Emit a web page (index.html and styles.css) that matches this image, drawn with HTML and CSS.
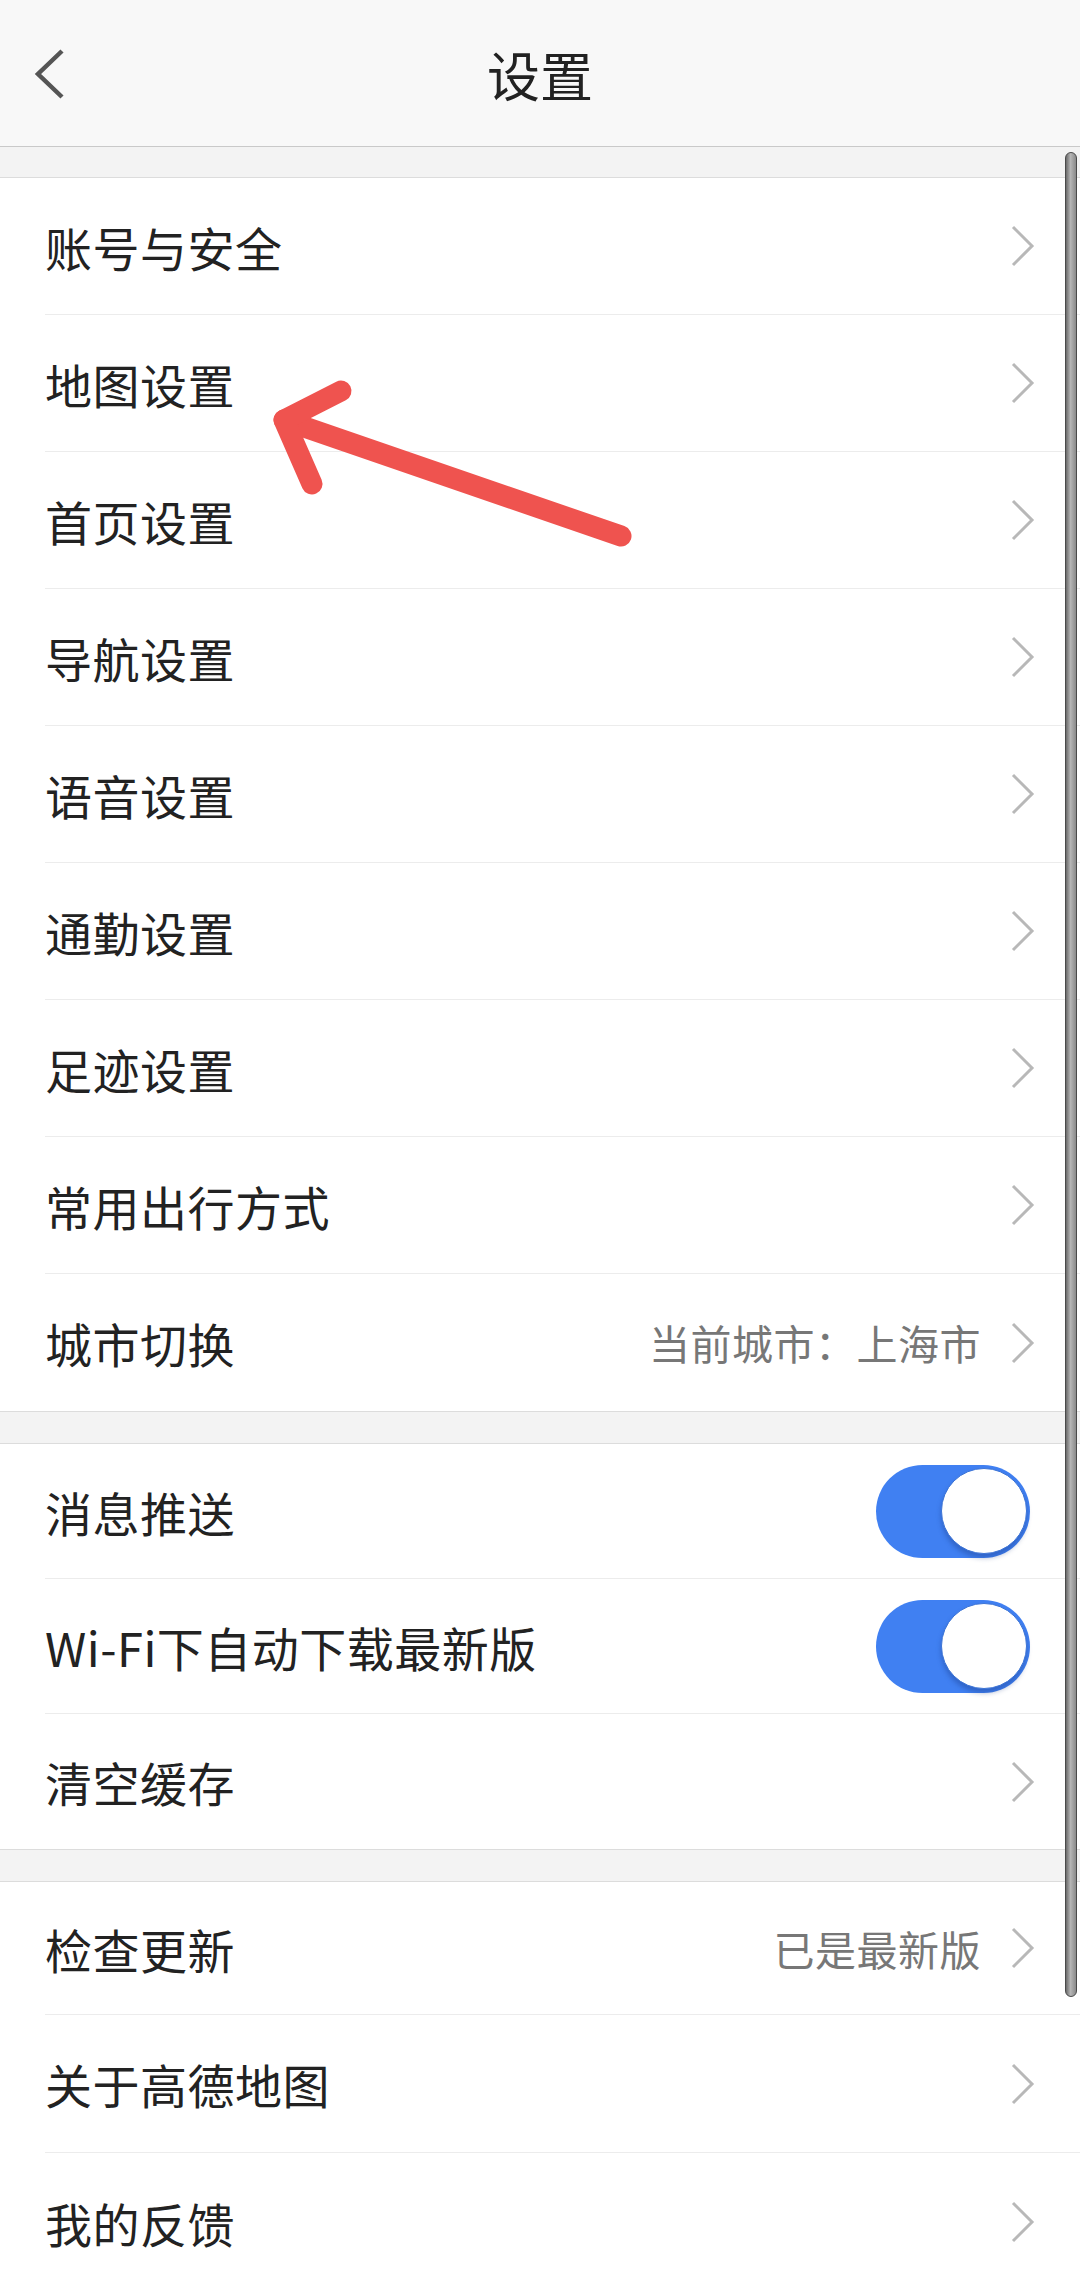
FILE: index.html
```html
<!DOCTYPE html>
<html lang="zh-CN">
<head>
<meta charset="utf-8">
<title>设置</title>
<link rel="stylesheet" href="styles.css">
</head>
<body>
<div class="page">
  <header class="header">
    <svg class="back" width="40" height="56" viewBox="0 0 40 56"><path d="M30 4 L6 27 L30 50" fill="none" stroke="#555" stroke-width="4.5" stroke-linejoin="miter"/></svg>
    <div class="title">设置</div>
  </header>

  <section class="group first">
    <div class="row"><span class="label">账号与安全</span><span class="chev"></span></div>
    <div class="row"><span class="label">地图设置</span><span class="chev"></span></div>
    <div class="row"><span class="label">首页设置</span><span class="chev"></span></div>
    <div class="row"><span class="label">导航设置</span><span class="chev"></span></div>
    <div class="row"><span class="label">语音设置</span><span class="chev"></span></div>
    <div class="row"><span class="label">通勤设置</span><span class="chev"></span></div>
    <div class="row"><span class="label">足迹设置</span><span class="chev"></span></div>
    <div class="row"><span class="label">常用出行方式</span><span class="chev"></span></div>
    <div class="row last"><span class="label">城市切换</span><span class="value">当前城市：上海市</span><span class="chev"></span></div>
  </section>

  <section class="group">
    <div class="row r2"><span class="label">消息推送</span><span class="toggle"><span class="knob"></span></span></div>
    <div class="row r2"><span class="label">Wi-Fi下自动下载最新版</span><span class="toggle"><span class="knob"></span></span></div>
    <div class="row r2 last"><span class="label">清空缓存</span><span class="chev"></span></div>
  </section>

  <section class="group">
    <div class="row r3"><span class="label">检查更新</span><span class="value">已是最新版</span><span class="chev"></span></div>
    <div class="row r3b"><span class="label">关于高德地图</span><span class="chev"></span></div>
    <div class="row r3b last"><span class="label">我的反馈</span><span class="chev"></span></div>
  </section>

  <div class="scrollbar"></div>

  <svg class="arrow" width="1080" height="600" viewBox="0 0 1080 600">
    <g fill="none" stroke="#ef534f" stroke-width="21" stroke-linecap="round" stroke-linejoin="round">
      <path d="M621 536 L284 420"/>
      <path d="M341 391 L284 420 L312 484"/>
    </g>
  </svg>
</div>
</body>
</html>
```

FILE: styles.css
```css
* { box-sizing: border-box; }
html, body {
  margin: 0;
  padding: 0;
  background: #f3f3f3;
}
body {
  font-family: "Noto Sans CJK SC", "Noto Sans", Roboto, sans-serif;
  color: #222;
  width: 1080px;
  height: 2280px;
  overflow: hidden;
}
.page {
  position: relative;
  width: 1080px;
  height: 2280px;
  overflow: hidden;
}
.header {
  height: 147px;
  background: #f8f8f8;
  border-bottom: 1px solid #c9c9c9;
  display: flex;
  align-items: center;
  justify-content: center;
  position: relative;
}
.back {
  position: absolute;
  left: 32px;
  top: 47px;
}
.title {
  font-size: 53px;
  color: #222;
  line-height: 1;
  margin-top: 2px;
}
.group {
  background: #fff;
  border-top: 1px solid #dcdcdc;
  border-bottom: 1px solid #dcdcdc;
  margin-top: 31px;
}
.group.first {
  margin-top: 30px;
}
.row {
  height: 137px;
  margin-left: 45px;
  padding-right: 45px;
  display: flex;
  align-items: center;
  border-bottom: 1px solid #ececec;
}
.row.r2 { height: 135px; }
.row.r3 { height: 133px; }
.row.r3b { height: 138px; }
.row.last { border-bottom: none; }
.label {
  flex: 1;
  font-size: 47px;
  line-height: 1;
  color: #222;
  letter-spacing: 0.5px;
}
.value {
  font-size: 41px;
  line-height: 1;
  color: #777;
  letter-spacing: 0.5px;
  margin-right: 30px;
}
.chev {
  width: 24px;
  height: 42px;
  flex: none;
  background: url("data:image/svg+xml;utf8,<svg xmlns='http://www.w3.org/2000/svg' width='24' height='42' viewBox='0 0 24 42'><path d='M2 2 L21 21 L2 40' fill='none' stroke='%23b8b8b8' stroke-width='3'/></svg>") no-repeat center;
}
.toggle {
  width: 154px;
  height: 93px;
  border-radius: 47px;
  background: #4080f2;
  display: flex;
  align-items: center;
  justify-content: flex-end;
  padding-right: 3px;
  margin-right: 5px;
  flex: none;
}
.knob {
  width: 86px;
  height: 86px;
  border-radius: 50%;
  background: #fff;
  border: 1.5px solid #3c74d6;
  box-shadow: 0 4px 5px rgba(20, 50, 120, 0.35);
}
.scrollbar {
  position: absolute;
  left: 1065px;
  top: 152px;
  width: 12px;
  height: 1845px;
  border-radius: 6px;
  border: 1.5px solid #4a4a4a;
  background: linear-gradient(to right, #6a6a6a, #b5b5b5 45%, #8a8a8a);
}
.arrow {
  position: absolute;
  left: 0;
  top: 0;
  pointer-events: none;
}
```
